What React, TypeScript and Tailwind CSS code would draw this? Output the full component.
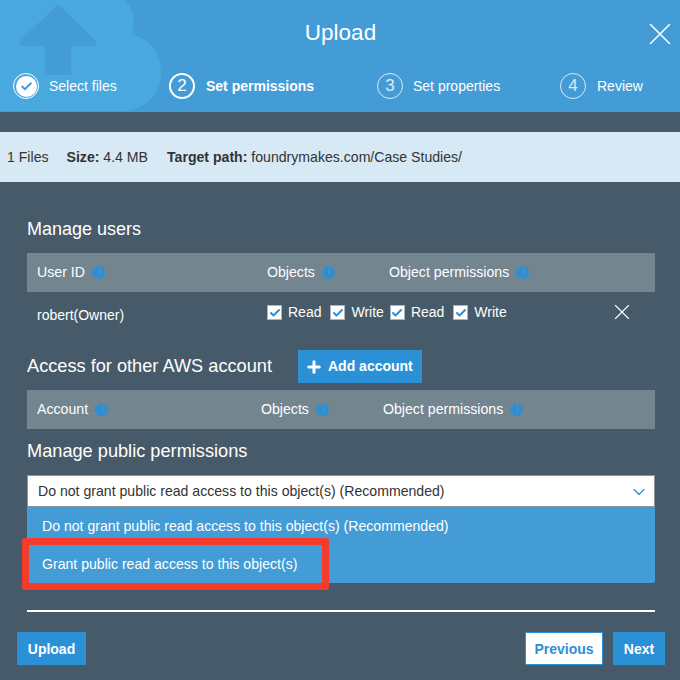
import { Check, ChevronDown, Plus, X } from "lucide-react";

const font = "font-['Liberation_Sans',Arial,sans-serif]";

function Step({ n, label, active, done, gap }: { n: string; label: string; active?: boolean; done?: boolean; gap: string }) {
  return (
    <div className={`flex items-center ${gap}`}>
      {done ? (
        <span className="flex h-[26px] w-[26px] items-center justify-center rounded-full border border-white">
          <span className="flex h-[21px] w-[21px] items-center justify-center rounded-full bg-white">
            <Check size={13} strokeWidth={3.5} className="text-[#449cd6]" />
          </span>
        </span>
      ) : (
        <span
          className={`flex h-[26px] w-[26px] items-center justify-center rounded-full border-white text-[17px] text-white ${
            active ? "border-2" : "border opacity-80"
          }`}
        >
          {n}
        </span>
      )}
      <span className={`text-[14px] text-white ${active ? "font-bold" : ""}`}>{label}</span>
    </div>
  );
}

function InfoDot() {
  return (
    <span className="flex h-[13px] w-[13px] items-center justify-center rounded-full bg-[#2b90d5]">
      <span className="text-[10px] font-bold leading-none text-[#73858f]">i</span>
    </span>
  );
}

function HeaderCell({ label, className }: { label: string; className?: string }) {
  return (
    <div className={`flex items-center gap-[7px] text-[14.15px] text-white ${className ?? ""}`}>
      {label}
      <InfoDot />
    </div>
  );
}

function Tick({ label, className }: { label: string; className?: string }) {
  return (
    <label className={`flex items-center gap-[6px] text-[14px] text-white ${className ?? ""}`}>
      <span className="flex h-[15px] w-[15px] items-center justify-center border border-[#aab4bb] bg-white">
        <Check size={12} strokeWidth={4} className="text-[#2b90d5]" />
      </span>
      {label}
    </label>
  );
}

function CloudMark() {
  return (
    <svg className="absolute left-0 top-0" width="162" height="112" viewBox="0 0 162 112" aria-hidden="true">
      <path
        d="M0 0H125C134 8 136 22 132 35C150 38 161 54 161 72C161 94 145 111 122 111H0Z"
        fill="#49a9de"
      />
      <path
        d="M56 6C57 5 59 5 60 6L96 41C97 43 96 46 94 46H71V75H45V46H22C20 46 19 43 20 41Z"
        fill="#449cd6"
      />
    </svg>
  );
}

export default function App() {
  return (
    <div className={`${font} flex h-[680px] w-[680px] flex-col overflow-hidden bg-[#465a69]`}>
      <header className="relative h-[112px] shrink-0 bg-[#449cd6]">
        <CloudMark />
        <div className="relative flex h-[67px] items-center justify-center pb-[1px] pl-[1px] text-[22.5px] text-white">Upload</div>
        <X size={38} strokeWidth={0.95} className="absolute right-[1px] top-[15px] text-white" />
        <div className="relative mt-[6px] flex pl-[13px]">
          <div className="w-[156px]"><Step n="1" label="Select files" gap="gap-[10px]" done /></div>
          <div className="w-[208px]"><Step n="2" label="Set permissions" gap="gap-[11px]" active /></div>
          <div className="w-[183px]"><Step n="3" label="Set properties" gap="gap-[10px]" /></div>
          <Step n="4" label="Review" gap="gap-[11px]" />
        </div>
      </header>

      <div className="mt-[20px] flex h-[50px] shrink-0 items-center bg-[#d6e9f5] pl-[7px] pt-[1px] text-[14.1px] text-[#333]">
        <span className="mr-[18px]">1 Files</span>
        <span className="mr-[19px]"><b>Size:</b> 4.4 MB</span>
        <span><b>Target path:</b> foundrymakes.com/Case Studies/</span>
      </div>

      <main className="flex grow flex-col pl-[27px] pr-[25px] pt-[35px]">
        <h2 className="h-[24px] text-[18px] leading-[24px] text-white">Manage users</h2>
        <div className="mt-[12px] flex h-[39px] items-center bg-[#73858f] pl-[10px]">
          <HeaderCell label="User ID" className="w-[230px]" />
          <HeaderCell label="Objects" className="w-[122px]" />
          <HeaderCell label="Object permissions" />
        </div>
        <div className="flex h-[58px] items-start">
          <span className="w-[240px] pl-[10px] pt-[13px] text-[14px] text-white">robert(Owner)</span>
          <div className="flex pt-[10px]">
            <Tick label="Read" className="mr-[9px]" />
            <Tick label="Write" className="mr-[6px]" />
            <Tick label="Read" className="mr-[9px]" />
            <Tick label="Write" />
          </div>
          <X size={26} strokeWidth={1} className="ml-auto mr-[20px] mt-[7px] text-white" />
        </div>
        <div className="flex h-[33px] items-center">
          <h2 className="w-[271px] text-[18.2px] text-white">Access for other AWS account</h2>
          <button className="flex h-[33px] w-[124px] items-center gap-[5px] bg-[#2b90d5] pl-[7px] text-[14px] font-bold text-white">
            <Plus size={18} strokeWidth={4} />
            Add account
          </button>
        </div>
        <div className="mt-[7px] flex h-[39px] items-center bg-[#73858f] pl-[10px]">
          <HeaderCell label="Account" className="w-[224px]" />
          <HeaderCell label="Objects" className="w-[122px]" />
          <HeaderCell label="Object permissions" />
        </div>
        <h2 className="mt-[10px] h-[24px] text-[18.2px] leading-[24px] text-white">Manage public permissions</h2>
        <div className="mt-[12px] flex h-[32px] items-center justify-between border border-[#8a949b] bg-white pb-0 pl-[10px] pr-[5px] pt-[1px] text-[14.1px] text-[#333]">
          Do not grant public read access to this object(s) (Recommended)
          <ChevronDown size={20} strokeWidth={1.5} className="text-[#2b90d5]" />
        </div>
        <div className="relative h-[76px] rounded-b-[2px] bg-[#449cd6] pl-[15px] text-[14.1px] text-white">
          <div className="flex h-[38px] items-center pt-[1px]">Do not grant public read access to this object(s) (Recommended)</div>
          <div className="flex h-[38px] items-center pt-[1px]">Grant public read access to this object(s)</div>
          <div className="absolute left-[-5px] top-[31px] h-[52px] w-[307px] rounded-[3px] border-[7px] border-[#f43b2c]" />
        </div>
        <div className="mt-[27px] h-[2px] bg-white" />
      </main>

      <footer className="flex h-[48px] shrink-0 items-start justify-between pl-[17px] pr-[15px] text-[14px] font-bold">
        <button className="h-[33px] w-[69px] bg-[#2b90d5] pt-[1px] text-white">Upload</button>
        <div className="flex gap-[10px]">
          <button className="h-[33px] w-[78px] border border-[#2b90d5] bg-white pt-[1px] text-[#2b90d5]">Previous</button>
          <button className="h-[33px] w-[52px] bg-[#2b90d5] pt-[1px] text-white">Next</button>
        </div>
      </footer>
    </div>
  );
}
